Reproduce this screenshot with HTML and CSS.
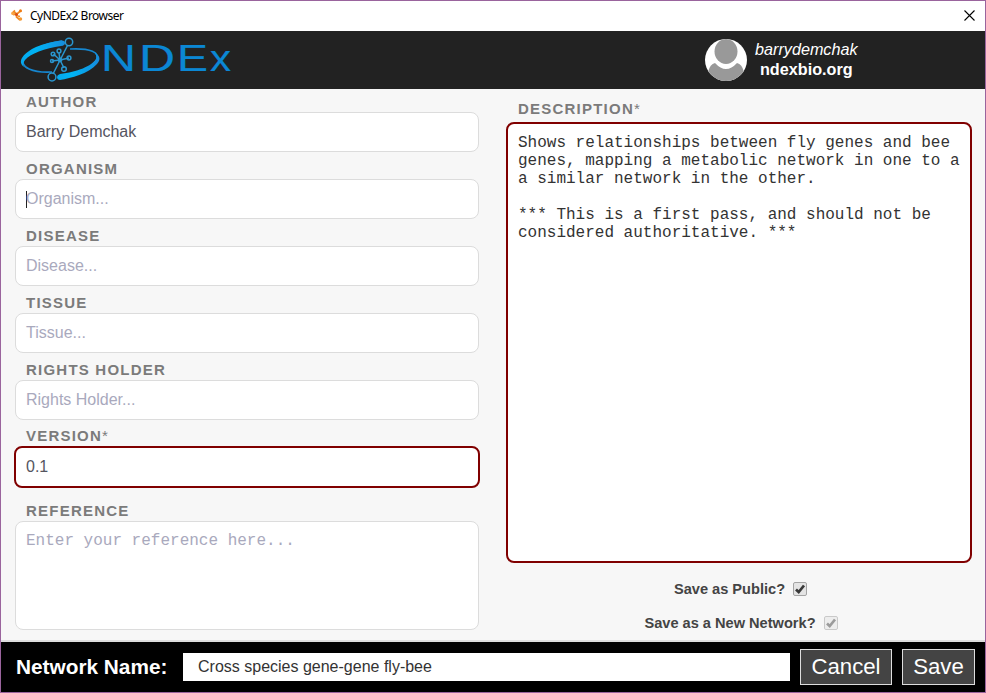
FILE: index.html
```html
<!DOCTYPE html>
<html lang="en">
<head>
<meta charset="utf-8">
<title>CyNDEx2 Browser</title>
<link rel="stylesheet" href="styles.css">
</head>
<body>
<div class="window">
  <div class="titlebar">
    <svg class="app-icon" width="12" height="12" viewBox="0 0 12 12" fill="none">
      <path d="M1 4.500 4 1.500M2 5.500 6 5 10 1.500M6 5 5.500 8 9 11M6 5 3 3M7 7 9 7.500" stroke="#f08a24" stroke-width="1.800"/>
      <circle cx="9.500" cy="1.800" r="1.500" fill="#ee7a12"/><circle cx="1.800" cy="4.500" r="1.600" fill="#f7a545"/>
      <circle cx="9.500" cy="10" r="1.700" fill="#f39a35"/><circle cx="5.500" cy="5.500" r="1.500" fill="#d94d13"/>
    </svg>
    <span class="window-title">CyNDEx2 Browser</span>
    <svg class="close" width="11" height="11" viewBox="0 0 11 11"><path d="M.5.5l10 10M10.5.5l-10 10" stroke="#000" stroke-width="1.1"/></svg>
  </div>
  <header class="header">
    <svg class="logo" width="222" height="56" viewBox="0 0 222 56" fill="none">
      <defs><linearGradient id="blue" x1="0" y1="0" x2="1" y2="0"><stop offset="0" stop-color="#05a9ee"/><stop offset=".35" stop-color="#00b4f4"/><stop offset="1" stop-color="#168bdc"/></linearGradient></defs>
      <path d="M52 9C38 11 21 17 15 25C7 36 25 41 42 40" stroke="#1686cf" stroke-width="1.6"/>
      <path d="M51 8.500Q55 8 55 11Q55 13.600 51 14C35 16 20 22 15 28Q12 32 14 35C6 29 15 20 26 15Q38 10 51 8.500Z" fill="url(#blue)"/>
      <path d="M60 17C79 16 92 20 86 29C80 38 65 43 49 45" stroke="#1686cf" stroke-width="1.6"/>
      <path d="M50 42C67 40 82 34 86 27Q87 23 84 20Q93 25 87 32C78 42 61 46 50 48Q47 48 47 45Q47 43 50 42Z" fill="url(#blue)"/>
      <g stroke="#2a96cf" stroke-width="1.500"><path d="M57.500 13.500 43 42M43.500 22 50 28M49 21 50 28M59 26 50 28M42 29 50 28M50 28 54 36"/>
      <circle cx="59" cy="10" r="3.700"/><circle cx="42" cy="45" r="3.900"/><circle cx="43" cy="22" r="1.800"/><circle cx="49" cy="19" r="1.900"/><circle cx="59" cy="26" r="1.900"/><circle cx="42" cy="29" r="1.500"/><circle cx="54" cy="37" r="2.300"/></g>
      <circle cx="50" cy="28" r="2.300" fill="#2a96cf"/>
      <g class="logo-text"><text x="91" y="39" textLength="35" lengthAdjust="spacingAndGlyphs">N</text><text x="129" y="39" textLength="36" lengthAdjust="spacingAndGlyphs">D</text><text x="167" y="39" textLength="31" lengthAdjust="spacingAndGlyphs">E</text><text x="200" y="39" textLength="21" lengthAdjust="spacingAndGlyphs">x</text></g>
    </svg>
    <div class="account">
      <svg width="42" height="42" viewBox="0 0 42 42"><defs><clipPath id="avatar"><circle cx="21" cy="21" r="21"/></clipPath></defs>
        <g clip-path="url(#avatar)"><rect width="42" height="42" fill="#fff"/><path d="M3 42V33Q5 25 10 24Q21 36 32 24Q37 25 39 33V42Z" fill="#999"/><ellipse cx="21" cy="12.500" rx="11.500" ry="12.500" fill="#999"/></g></svg>
      <div class="account-text"><span class="user">barrydemchak</span><span class="server">ndexbio.org</span></div>
    </div>
  </header>
  <main class="main">
    <section class="left">
      <label>AUTHOR</label><div class="field value">Barry Demchak</div>
      <label>ORGANISM</label><div class="field focused">Organism...</div>
      <label>DISEASE</label><div class="field">Disease...</div>
      <label>TISSUE</label><div class="field">Tissue...</div>
      <label>RIGHTS HOLDER</label><div class="field">Rights Holder...</div>
      <label class="version-label">VERSION<span class="star">*</span></label><div class="field value required">0.1</div>
      <label class="reference-label">REFERENCE</label><div class="field reference">Enter your reference here...</div>
    </section>
    <section class="right">
      <label class="description-label">DESCRIPTION<span class="star">*</span></label>
      <div class="description">Shows relationships between fly genes and bee
genes, mapping a metabolic network in one to a
a similar network in the other.

*** This is a first pass, and should not be
considered authoritative. ***</div>
      <div class="option public"><span>Save as Public?</span><svg class="check" width="14" height="14" viewBox="0 0 14 14"><rect x=".5" y=".5" width="13" height="13" rx="1.500" fill="#e4e4e4" stroke="#a4a4a4"/><path d="M3 7.500 5.700 10 11 3.500" fill="none" stroke="#383838" stroke-width="2.700"/></svg></div>
      <div class="option new"><span>Save as a New Network?</span><svg class="check" width="14" height="14" viewBox="0 0 14 14"><rect x=".5" y=".5" width="13" height="13" rx="1.500" fill="#ededed" stroke="#c9c9c9"/><path d="M3 7.500 5.700 10 11 3.500" fill="none" stroke="#9b9b9b" stroke-width="2.700"/></svg></div>
    </section>
  </main>
  <footer class="footer">
    <span class="name-label">Network Name:</span>
    <div class="name-input">Cross species gene-gene fly-bee</div>
    <div class="button cancel">Cancel</div>
    <div class="button save">Save</div>
  </footer>
</div>
</body>
</html>
```
FILE: styles.css
```css
* { box-sizing: border-box; }
body { margin: 0; font-family: "Liberation Sans", Arial, sans-serif; }
.window { width: 986px; height: 693px; border: 1px solid #9a649d; display: flex; flex-direction: column; overflow: hidden; background: #f7f7f7; }
.titlebar { height: 30px; background: #fff; display: flex; align-items: center; padding: 0 10px; flex: none; }
.app-icon { margin-top: -2px; }
.window-title { font: 12px "Noto Sans", sans-serif; letter-spacing: -.5px; margin: -2px 0 0 7px; color: #000; }
.close { margin: -2px 0 0 auto; }
.header { height: 58px; background: #222; display: flex; flex: none; }
.logo { margin: 1px 0 0 9px; }
.logo-text { font: 36px "Liberation Sans", sans-serif; fill: #0b87d4; stroke: #0b87d4; stroke-width: .2px; }
.account { display: flex; margin: 8px 0 0 473px; color: #fff; }
.account-text { display: flex; flex-direction: column; align-items: center; margin-left: 8px; font-size: 16.2px; line-height: 20px; }
.user { font-style: italic; }
.server { font-weight: bold; }
.main { height: 551px; display: flex; flex: none; }
label { display: block; height: 27px; line-height: 33px; padding-left: 11px; font-size: 15px; font-weight: bold; letter-spacing: 1.22px; color: #7b7b7b; }
.star { font-weight: normal; }
.left { width: 464px; margin: -4px 0 0 14px; }
.field { height: 40px; border: 1px solid #dcdcdc; border-radius: 8px; background: #fff; padding-left: 10px; font-size: 16px; line-height: 38px; color: #a9a9bd; }
.value { color: #55555f; }
.focused::before { content: ""; display: inline-block; width: 1px; height: 17px; margin-right: -1px; background: #222; vertical-align: -4px; }
.version-label { height: 26px; line-height: 31px; }
.required { width: 466px; height: 42px; margin-left: -1px; padding-left: 10px; border: 2px solid #800000; }
.reference-label { height: 33px; line-height: 45px; }
.reference { height: 109px; font-family: "Liberation Mono", monospace; line-height: 18px; padding-top: 10px; }
.right { width: 466px; margin: 6px 0 0 27px; }
.description-label { line-height: 27px; padding-left: 12px; }
.description { height: 441px; border: 2px solid #800000; border-radius: 8px; background: #fff; padding: 10px; font: 16px/18px "Liberation Mono", monospace; white-space: pre; color: #333; }
.option { display: flex; justify-content: center; align-items: center; height: 20px; font-size: 14.6px; line-height: 18px; font-weight: bold; color: #444; }
.public { margin: 16px 0 14px 3px; }
.new { margin-left: 4px; }
.check { margin-left: 8px; }
.footer { height: 52px; border-top: 2px solid #ddd; background: #000; display: flex; align-items: center; flex: none; color: #fff; }
.name-label { width: 167px; margin: 0 0 0 15px; font-size: 20.8px; font-weight: bold; white-space: nowrap; }
.name-input { width: 607px; height: 28px; background: #fff; color: #333; line-height: 27px; padding-left: 15px; font-size: 16px; }
.button { height: 36px; border: 1px solid #ddd; background: #444; font-size: 22.2px; line-height: 33px; text-align: center; margin-left: 10px; color: #fff; }
.cancel { width: 92px; }
.save { width: 73px; }
```
